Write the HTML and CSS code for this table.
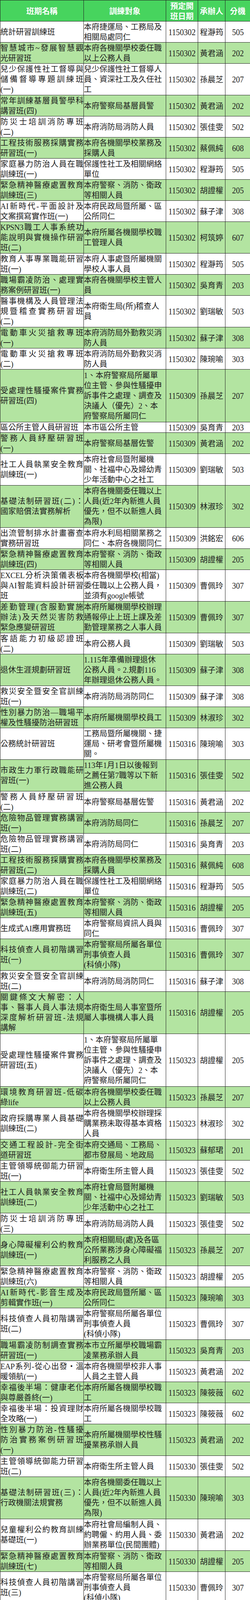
FILE: index.html
```html
<!DOCTYPE html>
<html lang="zh-Hant">
<head>
<meta charset="utf-8">
<title>班期一覽</title>
<link rel="stylesheet" href="styles.css">
</head>
<body>
<table class="sched">
<colgroup><col class="c1"><col class="c2"><col class="c3"><col class="c4"><col class="c5"></colgroup>
<thead>
<tr><th><span class="l">班期名稱</span></th><th><span class="l">訓練對象</span></th><th><span class="l">預定開</span><span class="l">班日期</span></th><th><span class="l">承辦人</span></th><th><span class="l">分機</span></th></tr>
</thead>
<tbody>
<tr><td class="nm"><span class="l">統計研習訓練班</span></td><td class="tg"><span class="l">本府捷運局、工務局及</span><span class="l">相關局處同仁</span></td><td class="dt"><span class="num">1150302</span></td><td class="who">程瀞筠</td><td class="ext"><span class="num">505</span></td></tr>
<tr><td class="nm"><span class="l">智慧城市~發展智慧觀</span><span class="l">光研習班</span></td><td class="tg"><span class="l">本府各機關學校委任職</span><span class="l">以上公務人員</span></td><td class="dt"><span class="num">1150302</span></td><td class="who">黃君涵</td><td class="ext"><span class="num">202</span></td></tr>
<tr class="n3"><td class="nm"><span class="l">兒少保護性社工督導與</span><span class="l">儲備督導專題訓練班</span><span class="l">(一)</span></td><td class="tg"><span class="l">兒少保護性社工督導人</span><span class="l">員、資深社工及久任社</span><span class="l">工</span></td><td class="dt"><span class="num">1150302</span></td><td class="who">孫晨芝</td><td class="ext"><span class="num">207</span></td></tr>
<tr><td class="nm"><span class="l">常年訓練基層員警學科</span><span class="l">講習班(四)</span></td><td class="tg"><span class="l">本府警察局基層員警</span></td><td class="dt"><span class="num">1150302</span></td><td class="who">黃君涵</td><td class="ext"><span class="num">202</span></td></tr>
<tr><td class="nm"><span class="l">防災士培訓消防專班</span><span class="l">(二)</span></td><td class="tg"><span class="l">本府消防局消防人員</span></td><td class="dt"><span class="num">1150302</span></td><td class="who">張佳雯</td><td class="ext"><span class="num">502</span></td></tr>
<tr><td class="nm"><span class="l">工程技術服務採購實務</span><span class="l">研習班(一)</span></td><td class="tg"><span class="l">本府各機關學校業務及</span><span class="l">採購人員</span></td><td class="dt"><span class="num">1150302</span></td><td class="who">蔡佩純</td><td class="ext"><span class="num">608</span></td></tr>
<tr><td class="nm"><span class="l">家庭暴力防治人員在職</span><span class="l">訓練班(一)</span></td><td class="tg"><span class="l">保護性社工及相關網絡</span><span class="l">單位</span></td><td class="dt"><span class="num">1150302</span></td><td class="who">程瀞筠</td><td class="ext"><span class="num">505</span></td></tr>
<tr><td class="nm"><span class="l">緊急精神醫療處置教育</span><span class="l">訓練班(三)</span></td><td class="tg"><span class="l">本府警察、消防、衛政</span><span class="l">等相關人員</span></td><td class="dt"><span class="num">1150302</span></td><td class="who">胡證權</td><td class="ext"><span class="num">205</span></td></tr>
<tr><td class="nm"><span class="l">AI新時代-平面設計及</span><span class="l">文案撰寫實作班(一)</span></td><td class="tg"><span class="l">本府民政局暨所屬、區</span><span class="l">公所同仁</span></td><td class="dt"><span class="num">1150302</span></td><td class="who">蘇子津</td><td class="ext"><span class="num">308</span></td></tr>
<tr class="n3"><td class="nm"><span class="l tight">KPSN3職工人事系統功</span><span class="l">能說明與實機操作研習</span><span class="l">班(二)</span></td><td class="tg"><span class="l">本府所屬各機關學校職</span><span class="l">工管理人員</span></td><td class="dt"><span class="num">1150302</span></td><td class="who">柯筑婷</td><td class="ext"><span class="num">607</span></td></tr>
<tr><td class="nm"><span class="l">教育人事專業職能研習</span><span class="l">班(一)</span></td><td class="tg"><span class="l">本府人事處暨所屬機關</span><span class="l">學校人事人員</span></td><td class="dt"><span class="num">1150302</span></td><td class="who">程瀞筠</td><td class="ext"><span class="num">505</span></td></tr>
<tr><td class="nm"><span class="l">職場霸凌防治、處理實</span><span class="l">務案例研習班(一)</span></td><td class="tg"><span class="l">本府各機關學校主管人</span><span class="l">員</span></td><td class="dt"><span class="num">1150302</span></td><td class="who">吳育青</td><td class="ext"><span class="num">203</span></td></tr>
<tr class="n3"><td class="nm"><span class="l">醫事機構及人員管理法</span><span class="l">規暨稽查實務研習班</span><span class="l">(二)</span></td><td class="tg"><span class="l">本府衛生局(所)稽查人</span><span class="l">員</span></td><td class="dt"><span class="num">1150302</span></td><td class="who">劉瑞敏</td><td class="ext"><span class="num">503</span></td></tr>
<tr><td class="nm"><span class="l">電動車火災搶救專班</span><span class="l">(一)</span></td><td class="tg"><span class="l">本府消防局外勤救災消</span><span class="l">防人員</span></td><td class="dt"><span class="num">1150302</span></td><td class="who">蘇子津</td><td class="ext"><span class="num">308</span></td></tr>
<tr><td class="nm"><span class="l">電動車火災搶救專班</span><span class="l">(二)</span></td><td class="tg"><span class="l">本府消防局外勤救災消</span><span class="l">防人員</span></td><td class="dt"><span class="num">1150302</span></td><td class="who">陳琬喻</td><td class="ext"><span class="num">303</span></td></tr>
<tr class="n5"><td class="nm"><span class="l">受處理性騷擾案件實務</span><span class="l">研習班(四)</span></td><td class="tg"><span class="l">1、本府警察局所屬單</span><span class="l">位主管、參與性騷擾申</span><span class="l">訴事件之處理、調查及</span><span class="l">決議人（優先）2、本</span><span class="l">府警察局所屬同仁</span></td><td class="dt"><span class="num">1150309</span></td><td class="who">孫晨芝</td><td class="ext"><span class="num">207</span></td></tr>
<tr class="n1"><td class="nm"><span class="l">區公所主管人員研習班</span></td><td class="tg"><span class="l">本市區公所主管</span></td><td class="dt"><span class="num">1150309</span></td><td class="who">吳育青</td><td class="ext"><span class="num">203</span></td></tr>
<tr><td class="nm"><span class="l">警務人員紓壓研習班</span><span class="l">(一)</span></td><td class="tg"><span class="l">本府警察局基層佐警</span></td><td class="dt"><span class="num">1150309</span></td><td class="who">黃君涵</td><td class="ext"><span class="num">202</span></td></tr>
<tr class="n3"><td class="nm"><span class="l">社工人員執業安全教育</span><span class="l">訓練班(一)</span></td><td class="tg"><span class="l">本府社會局暨附屬機</span><span class="l">關、社福中心及婦幼青</span><span class="l">少年活動中心之社工</span></td><td class="dt"><span class="num">1150309</span></td><td class="who">劉瑞敏</td><td class="ext"><span class="num">503</span></td></tr>
<tr class="n4"><td class="nm"><span class="l">基礎法制研習班(二)：</span><span class="l">國家賠償法實務解析</span></td><td class="tg"><span class="l">本府各機關委任職以上</span><span class="l">人員(近2年內新進人員</span><span class="l">優先，但不以新進人員</span><span class="l">為限)</span></td><td class="dt"><span class="num">1150309</span></td><td class="who">林淑珍</td><td class="ext"><span class="num">302</span></td></tr>
<tr><td class="nm"><span class="l">出流管制排水計畫審查</span><span class="l">實務研習班</span></td><td class="tg"><span class="l">本府水利局相關業務之</span><span class="l">同仁、本府各機關同仁</span></td><td class="dt"><span class="num">1150309</span></td><td class="who">洪銘宏</td><td class="ext"><span class="num">606</span></td></tr>
<tr><td class="nm"><span class="l">緊急精神醫療處置教育</span><span class="l">訓練班(四)</span></td><td class="tg"><span class="l">本府警察、消防、衛政</span><span class="l">等相關人員</span></td><td class="dt"><span class="num">1150309</span></td><td class="who">胡證權</td><td class="ext"><span class="num">205</span></td></tr>
<tr class="n3"><td class="nm"><span class="l tight">EXCEL分析決策儀表板</span><span class="l">與AI智能資料設計研習</span><span class="l">班</span></td><td class="tg"><span class="l">本府各機關學校(相當)</span><span class="l">委任職以上公務人員，</span><span class="l">並須有google帳號</span></td><td class="dt"><span class="num">1150309</span></td><td class="who">曹佩玲</td><td class="ext"><span class="num">307</span></td></tr>
<tr class="n3"><td class="nm"><span class="l">差勤管理(含服勤實施</span><span class="l">辦法)及天然災害防救</span><span class="l">緊急應變研習班</span></td><td class="tg"><span class="l">本府所屬機關學校辦理</span><span class="l">通報停止上班上課及差</span><span class="l">勤管理業務之人事人員</span></td><td class="dt"><span class="num">1150309</span></td><td class="who">曹佩玲</td><td class="ext"><span class="num">307</span></td></tr>
<tr><td class="nm"><span class="l">客語能力初級認證班</span><span class="l">(二)</span></td><td class="tg"><span class="l">本府公務人員</span></td><td class="dt"><span class="num">1150309</span></td><td class="who">劉瑞敏</td><td class="ext"><span class="num">503</span></td></tr>
<tr class="n3"><td class="nm"><span class="l">退休生涯規劃研習班</span></td><td class="tg"><span class="l">1.115年準備辦理退休</span><span class="l">公務人員。2.規劃116</span><span class="l">年辦理退休公務人員。</span></td><td class="dt"><span class="num">1150309</span></td><td class="who">蘇子津</td><td class="ext"><span class="num">308</span></td></tr>
<tr><td class="nm"><span class="l">救災安全暨安全官訓練</span><span class="l">班(一)</span></td><td class="tg"><span class="l">本府消防局消防同仁</span></td><td class="dt"><span class="num">1150309</span></td><td class="who">蘇子津</td><td class="ext"><span class="num">308</span></td></tr>
<tr><td class="nm"><span class="l">性別暴力防治—職場平</span><span class="l">權及性騷擾防治研習班</span></td><td class="tg"><span class="l">本府所屬機關學校員工</span></td><td class="dt"><span class="num">1150309</span></td><td class="who">林淑珍</td><td class="ext"><span class="num">302</span></td></tr>
<tr class="n3"><td class="nm"><span class="l">公務統計研習班</span></td><td class="tg"><span class="l">工務局暨所屬機關、捷</span><span class="l">運局、研考會暨所屬機</span><span class="l">關。</span></td><td class="dt"><span class="num">1150316</span></td><td class="who">陳琬喻</td><td class="ext"><span class="num">303</span></td></tr>
<tr class="n3"><td class="nm"><span class="l">市政生力軍行政職能研</span><span class="l">習班(一)</span></td><td class="tg"><span class="l">113年1月1日以後報到</span><span class="l">之薦任第7職等以下新</span><span class="l">進公務人員</span></td><td class="dt"><span class="num">1150316</span></td><td class="who">張佳雯</td><td class="ext"><span class="num">502</span></td></tr>
<tr><td class="nm"><span class="l">警務人員紓壓研習班</span><span class="l">(二)</span></td><td class="tg"><span class="l">本府警察局基層佐警</span></td><td class="dt"><span class="num">1150316</span></td><td class="who">黃君涵</td><td class="ext"><span class="num">202</span></td></tr>
<tr><td class="nm"><span class="l">危險物品管理實務講習</span><span class="l">班(一)</span></td><td class="tg"><span class="l">本府消防局同仁</span></td><td class="dt"><span class="num">1150316</span></td><td class="who">孫晨芝</td><td class="ext"><span class="num">207</span></td></tr>
<tr><td class="nm"><span class="l">危險物品管理實務講習</span><span class="l">班(二)</span></td><td class="tg"><span class="l">本府消防局同仁</span></td><td class="dt"><span class="num">1150316</span></td><td class="who">吳育青</td><td class="ext"><span class="num">203</span></td></tr>
<tr><td class="nm"><span class="l">工程技術服務採購實務</span><span class="l">研習班(二)</span></td><td class="tg"><span class="l">本府各機關學校業務及</span><span class="l">採購人員</span></td><td class="dt"><span class="num">1150316</span></td><td class="who">蔡佩純</td><td class="ext"><span class="num">608</span></td></tr>
<tr><td class="nm"><span class="l">家庭暴力防治人員在職</span><span class="l">訓練班(二)</span></td><td class="tg"><span class="l">保護性社工及相關網絡</span><span class="l">單位</span></td><td class="dt"><span class="num">1150316</span></td><td class="who">程瀞筠</td><td class="ext"><span class="num">505</span></td></tr>
<tr><td class="nm"><span class="l">緊急精神醫療處置教育</span><span class="l">訓練班(五)</span></td><td class="tg"><span class="l">本府警察、消防、衛政</span><span class="l">等相關人員</span></td><td class="dt"><span class="num">1150316</span></td><td class="who">胡證權</td><td class="ext"><span class="num">205</span></td></tr>
<tr><td class="nm"><span class="l">生成式AI應用實務班</span></td><td class="tg"><span class="l">本府警察局資訊人員與</span><span class="l">同仁</span></td><td class="dt"><span class="num">1150316</span></td><td class="who">曹佩玲</td><td class="ext"><span class="num">307</span></td></tr>
<tr class="n3"><td class="nm"><span class="l">科技偵查人員初階講習</span><span class="l">班(一)</span></td><td class="tg"><span class="l">本府警察局所屬各單位</span><span class="l">刑事偵查人員</span><span class="l">(科偵小隊)</span></td><td class="dt"><span class="num">1150316</span></td><td class="who">曹佩玲</td><td class="ext"><span class="num">307</span></td></tr>
<tr><td class="nm"><span class="l">救災安全暨安全官訓練</span><span class="l">班(二)</span></td><td class="tg"><span class="l">本府消防局消防同仁</span></td><td class="dt"><span class="num">1150316</span></td><td class="who">蘇子津</td><td class="ext"><span class="num">308</span></td></tr>
<tr class="n4"><td class="nm"><span class="l">關鍵條文大解密：人</span><span class="l">事、醫事人員人事法規</span><span class="l">深度解析研習班-法規</span><span class="l">講解</span></td><td class="tg"><span class="l">本府衛生局人事室暨所</span><span class="l">屬人事機構人事人員</span></td><td class="dt"><span class="num">1150316</span></td><td class="who">胡證權</td><td class="ext"><span class="num">205</span></td></tr>
<tr class="n5"><td class="nm"><span class="l">受處理性騷擾案件實務</span><span class="l">研習班(五)</span></td><td class="tg"><span class="l">1、本府警察局所屬單</span><span class="l">位主管、參與性騷擾申</span><span class="l">訴事件之處理、調查及</span><span class="l">決議人（優先）2、本</span><span class="l">府警察局所屬同仁</span></td><td class="dt"><span class="num">1150323</span></td><td class="who">胡證權</td><td class="ext"><span class="num">205</span></td></tr>
<tr><td class="nm"><span class="l">環境教育研習班-低碳</span><span class="l">綠life</span></td><td class="tg"><span class="l">本府各機關學校委任職</span><span class="l">以上公務人員</span></td><td class="dt"><span class="num">1150323</span></td><td class="who">孫晨芝</td><td class="ext"><span class="num">207</span></td></tr>
<tr class="n3"><td class="nm"><span class="l">政府採購專業人員基礎</span><span class="l">訓練班(二)</span></td><td class="tg"><span class="l">本府各機關學校辦理採</span><span class="l">購業務未取得基本資格</span><span class="l">人員</span></td><td class="dt"><span class="num">1150323</span></td><td class="who">林淑珍</td><td class="ext"><span class="num">302</span></td></tr>
<tr><td class="nm"><span class="l">交通工程設計-完全街</span><span class="l">道研習班</span></td><td class="tg"><span class="l">本府交通局、工務局、</span><span class="l">都市發展局、地政局</span></td><td class="dt"><span class="num">1150323</span></td><td class="who">蘇郁珺</td><td class="ext"><span class="num">201</span></td></tr>
<tr><td class="nm"><span class="l">主管領導統御能力研習</span><span class="l">班(一)</span></td><td class="tg"><span class="l">本府衛生所主管人員</span></td><td class="dt"><span class="num">1150323</span></td><td class="who">張佳雯</td><td class="ext"><span class="num">502</span></td></tr>
<tr class="n3"><td class="nm"><span class="l">社工人員執業安全教育</span><span class="l">訓練班(二)</span></td><td class="tg"><span class="l">本府社會局暨附屬機</span><span class="l">關、社福中心及婦幼青</span><span class="l">少年活動中心之社工</span></td><td class="dt"><span class="num">1150323</span></td><td class="who">劉瑞敏</td><td class="ext"><span class="num">503</span></td></tr>
<tr><td class="nm"><span class="l">防災士培訓消防專班</span><span class="l">(三)</span></td><td class="tg"><span class="l">本府消防局消防人員</span></td><td class="dt"><span class="num">1150323</span></td><td class="who">張佳雯</td><td class="ext"><span class="num">502</span></td></tr>
<tr class="n3"><td class="nm"><span class="l">身心障礙權利公約教育</span><span class="l">訓練班(一)</span></td><td class="tg"><span class="l">本府相關局(處)及各區</span><span class="l">公所業務涉身心障礙福</span><span class="l">利服務之人員</span></td><td class="dt"><span class="num">1150323</span></td><td class="who">孫晨芝</td><td class="ext"><span class="num">207</span></td></tr>
<tr><td class="nm"><span class="l">緊急精神醫療處置教育</span><span class="l">訓練班(六)</span></td><td class="tg"><span class="l">本府警察、消防、衛政</span><span class="l">等相關人員</span></td><td class="dt"><span class="num">1150323</span></td><td class="who">胡證權</td><td class="ext"><span class="num">205</span></td></tr>
<tr><td class="nm"><span class="l">AI新時代-影音生成及</span><span class="l">剪輯實作班(一)</span></td><td class="tg"><span class="l">本府民政局暨所屬、區</span><span class="l">公所同仁</span></td><td class="dt"><span class="num">1150323</span></td><td class="who">陳琬喻</td><td class="ext"><span class="num">303</span></td></tr>
<tr class="n3"><td class="nm"><span class="l">科技偵查人員初階講習</span><span class="l">班(二)</span></td><td class="tg"><span class="l">本府警察局所屬各單位</span><span class="l">刑事偵查人員</span><span class="l">(科偵小隊)</span></td><td class="dt"><span class="num">1150323</span></td><td class="who">曹佩玲</td><td class="ext"><span class="num">307</span></td></tr>
<tr><td class="nm"><span class="l">職場霸凌防制調查實務</span><span class="l">研習班(一)</span></td><td class="tg"><span class="l">本市立所屬學校職場霸</span><span class="l">凌業務承辦人員</span></td><td class="dt"><span class="num">1150323</span></td><td class="who">吳育青</td><td class="ext"><span class="num">203</span></td></tr>
<tr><td class="nm"><span class="l tight">EAP系列-從心出發‧溫</span><span class="l">暖領航(一)</span></td><td class="tg"><span class="l">本府各機關學校非人事</span><span class="l">人員之主管人員</span></td><td class="dt"><span class="num">1150323</span></td><td class="who">黃君涵</td><td class="ext"><span class="num">202</span></td></tr>
<tr><td class="nm"><span class="l">幸福後半場：健康老化</span><span class="l">與尊嚴善終(一)</span></td><td class="tg"><span class="l">本府所屬各機關學校職</span><span class="l">工</span></td><td class="dt"><span class="num">1150323</span></td><td class="who">陳筱薇</td><td class="ext"><span class="num">602</span></td></tr>
<tr><td class="nm"><span class="l">幸福後半場：投資理財</span><span class="l">全攻略(一)</span></td><td class="tg"><span class="l">本府所屬各機關學校職</span><span class="l">工</span></td><td class="dt"><span class="num">1150323</span></td><td class="who">陳筱薇</td><td class="ext"><span class="num">602</span></td></tr>
<tr class="n3"><td class="nm"><span class="l">性別暴力防治-性騷擾</span><span class="l">防治實務案例研習班</span><span class="l">(一)</span></td><td class="tg"><span class="l">本府所屬機關學校性騷</span><span class="l">擾業務承辦人員</span></td><td class="dt"><span class="num">1150323</span></td><td class="who">黃君涵</td><td class="ext"><span class="num">202</span></td></tr>
<tr><td class="nm"><span class="l">主管領導統御能力研習</span><span class="l">班(二)</span></td><td class="tg"><span class="l">本府衛生所主管人員</span></td><td class="dt"><span class="num">1150330</span></td><td class="who">張佳雯</td><td class="ext"><span class="num">502</span></td></tr>
<tr class="n4"><td class="nm"><span class="l">基礎法制研習班(三)：</span><span class="l">行政機關法規實務</span></td><td class="tg"><span class="l">本府各機關委任職以上</span><span class="l">人員(近2年內新進人員</span><span class="l">優先，但不以新進人員</span><span class="l">為限)</span></td><td class="dt"><span class="num">1150330</span></td><td class="who">陳琬喻</td><td class="ext"><span class="num">303</span></td></tr>
<tr class="n3"><td class="nm"><span class="l">兒童權利公約教育訓練</span><span class="l">基礎班(一)</span></td><td class="tg"><span class="l">本府社會局編制人員、</span><span class="l">約聘僱、約用人員、委</span><span class="l">辦業務單位(民間團體)</span></td><td class="dt"><span class="num">1150330</span></td><td class="who">黃君涵</td><td class="ext"><span class="num">202</span></td></tr>
<tr><td class="nm"><span class="l">緊急精神醫療處置教育</span><span class="l">訓練班(七)</span></td><td class="tg"><span class="l">本府警察、消防、衛政</span><span class="l">等相關人員</span></td><td class="dt"><span class="num">1150330</span></td><td class="who">胡證權</td><td class="ext"><span class="num">205</span></td></tr>
<tr class="n3"><td class="nm"><span class="l">科技偵查人員初階講習</span><span class="l">班(三)</span></td><td class="tg"><span class="l">本府警察局所屬各單位</span><span class="l">刑事偵查人員</span><span class="l">(科偵小隊)</span></td><td class="dt"><span class="num">1150330</span></td><td class="who">曹佩玲</td><td class="ext"><span class="num">307</span></td></tr>
<tr><td class="nm"><span class="l">職場霸凌防制調查實務</span><span class="l">研習班(二)</span></td><td class="tg"><span class="l">本市立所屬學校職場霸</span><span class="l">凌業務承辦人員</span></td><td class="dt"><span class="num">1150330</span></td><td class="who">吳育青</td><td class="ext"><span class="num">203</span></td></tr>
<tr><td class="nm"><span class="l">職場霸凌之認知與應變</span><span class="l">研習班(一)</span></td><td class="tg"><span class="l">本府各機關學校委任職</span><span class="l">以上公務人員</span></td><td class="dt"><span class="num">1150330</span></td><td class="who">吳育青</td><td class="ext"><span class="num">203</span></td></tr>
</tbody>
</table>
</body>
</html>
```

FILE: styles.css
```css
html, body {
  margin: 0;
  padding: 0;
  background: #ffffff;
}

body {
  font-family: "Liberation Serif", "Noto Sans CJK TC", sans-serif;
  color: #1c1c1c;
}

.sched {
  border-collapse: collapse;
  table-layout: fixed;
  width: 641px;
  font-size: 20px;
  line-height: 26px;
}

.c1 { width: 214px; }
.c2 { width: 211px; }
.c3 { width: 82px; }
.c4 { width: 70px; }
.c5 { width: 64px; }

.sched th,
.sched td {
  border: 1px solid #222222;
  padding: 0;
  vertical-align: middle;
}

/* every text line takes 27px of row height (26px line + spacing) */
.sched thead th {
  padding-top: 1px;
  padding-bottom: 0;
}

.sched tbody td {
  padding-top: 1px;
  padding-bottom: 0;
}

.sched tbody tr.n1 td {
  padding-top: 0;
  padding-bottom: 0;
}

.sched tbody tr.n3 td {
  padding-top: 1px;
  padding-bottom: 1px;
}

.sched tbody tr.n4 td {
  padding-top: 1px;
  padding-bottom: 2px;
}

.sched tbody tr.n5 td {
  padding-top: 2px;
  padding-bottom: 2px;
}

.sched thead th {
  background: #47d45e;
  color: #ffffff;
  font-family: "Noto Sans CJK TC", sans-serif;
  font-weight: 700;
  text-align: center;
}

.sched tbody tr:nth-child(even) {
  background: #b3e4a1;
}

/* one text line, fixed height so fallback fonts never grow the row */
.l {
  display: block;
  height: 26px;
  white-space: nowrap;
}

.nm {
  text-align: left;
  padding-left: 6px;
  padding-right: 4px;
}

.tg {
  text-align: left;
  padding-left: 5px;
  padding-right: 3px;
}

.tight {
  letter-spacing: -0.5px;
}

.nm .l:not(:last-child) {
  text-align: justify;
  text-align-last: justify;
}

.dt,
.who,
.ext {
  text-align: center;
}

.who {
  font-family: "Noto Sans CJK TC", sans-serif;
  white-space: nowrap;
}

.num {
  display: inline-block;
  vertical-align: top;
  font-size: 24px;
  line-height: 26px;
  margin: 0 -12px;
  transform: scaleX(0.84);
  color: #222222;
}
```
